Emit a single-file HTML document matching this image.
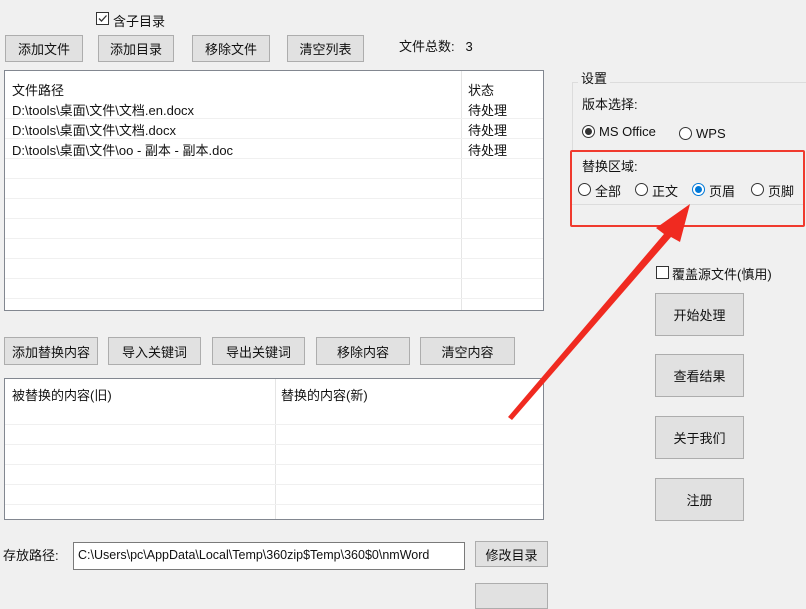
<!DOCTYPE html>
<html><head><meta charset="utf-8"><style>
*{box-sizing:border-box;margin:0;padding:0}
body{width:806px;height:588px;background:#f0f0f0;position:relative;overflow:hidden;font-family:"Liberation Sans","Microsoft YaHei","Noto Sans CJK SC",sans-serif;font-size:13px;color:#111}
.a{position:absolute;white-space:nowrap}
.btn{position:absolute;background:#e1e1e1;border:1px solid #adadad;display:flex;align-items:center;justify-content:center;font-size:13px}
.list{position:absolute;background:#fff;border:1px solid #828790}
.hl{position:absolute;left:0;right:0;height:1px;background:#f0f0f0}
.vl{position:absolute;top:0;bottom:0;width:1px;background:#f0f0f0}
.rad{position:absolute;width:13px;height:13px;border:1px solid #333;border-radius:50%;background:#fff}
.rad.on::after{content:"";position:absolute;left:2px;top:2px;width:7px;height:7px;border-radius:50%;background:#333}
.rad.blue{border-color:#0078d7}.rad.blue::after{background:#0078d7}
.chk{position:absolute;width:13px;height:13px;border:1px solid #333;background:#fff}
</style></head><body>
<div class="chk" style="left:96px;top:12px"><svg width="11" height="11" style="position:absolute;left:0;top:0"><path d="M2 5.5 L4.5 8 L9.5 2.5" stroke="#333" stroke-width="1.3" fill="none"/></svg></div>
<div class="a" style="left:113px;top:11px">含子目录</div>
<div class="btn" style="left:5px;top:35px;width:78px;height:27px">添加文件</div>
<div class="btn" style="left:98px;top:35px;width:76px;height:27px">添加目录</div>
<div class="btn" style="left:192px;top:35px;width:78px;height:27px">移除文件</div>
<div class="btn" style="left:287px;top:35px;width:77px;height:27px">清空列表</div>
<div class="a" style="left:399px;top:36px">文件总数:&nbsp;&nbsp;&nbsp;3</div>

<div class="list" style="left:4px;top:70px;width:540px;height:241px">
<div class="vl" style="left:456px;background:#e5e5e5"></div>
<div class="a" style="left:7px;top:9px">文件路径</div><div class="a" style="left:463px;top:9px">状态</div>
<div class="hl" style="top:47px"></div><div class="hl" style="top:67px"></div><div class="hl" style="top:87px"></div><div class="hl" style="top:107px"></div><div class="hl" style="top:127px"></div><div class="hl" style="top:147px"></div><div class="hl" style="top:167px"></div><div class="hl" style="top:187px"></div><div class="hl" style="top:207px"></div><div class="hl" style="top:227px"></div>
<div class="a" style="left:7px;top:29px">D:\tools\桌面\文件\文档.en.docx</div><div class="a" style="left:463px;top:29px">待处理</div>
<div class="a" style="left:7px;top:49px">D:\tools\桌面\文件\文档.docx</div><div class="a" style="left:463px;top:49px">待处理</div>
<div class="a" style="left:7px;top:69px">D:\tools\桌面\文件\oo - 副本 - 副本.doc</div><div class="a" style="left:463px;top:69px">待处理</div>
</div>

<div class="btn" style="left:4px;top:337px;width:94px;height:28px">添加替换内容</div>
<div class="btn" style="left:108px;top:337px;width:93px;height:28px">导入关键词</div>
<div class="btn" style="left:212px;top:337px;width:93px;height:28px">导出关键词</div>
<div class="btn" style="left:316px;top:337px;width:94px;height:28px">移除内容</div>
<div class="btn" style="left:420px;top:337px;width:95px;height:28px">清空内容</div>

<div class="list" style="left:4px;top:378px;width:540px;height:142px">
<div class="vl" style="left:270px;background:#e5e5e5"></div>
<div class="a" style="left:7px;top:6px">被替换的内容(旧)</div><div class="a" style="left:276px;top:6px">替换的内容(新)</div>
<div class="hl" style="top:45px"></div><div class="hl" style="top:65px"></div><div class="hl" style="top:85px"></div><div class="hl" style="top:105px"></div><div class="hl" style="top:125px"></div>
</div>

<div class="a" style="left:3px;top:545px">存放路径:</div>
<div class="a" style="left:73px;top:542px;width:392px;height:28px;background:#fff;border:1px solid #7a7a7a;overflow:hidden;padding:5px 0 0 4px;font-size:12.5px">C:\Users\pc\AppData\Local\Temp\360zip$Temp\360$0\nmWord</div>
<div class="btn" style="left:475px;top:541px;width:73px;height:26px">修改目录</div>
<div class="btn" style="left:475px;top:583px;width:73px;height:26px"></div>

<div class="a" style="left:572px;top:82px;width:240px;height:70px;border:1px solid #dcdcdc;border-bottom:none"></div>
<div class="a" style="left:578px;top:68px;background:#f0f0f0;padding:0 3px">设置</div>
<div class="a" style="left:582px;top:94px">版本选择:</div>
<div class="rad on" style="left:582px;top:125px"></div><div class="a" style="left:599px;top:124px">MS Office</div>
<div class="rad" style="left:679px;top:127px"></div><div class="a" style="left:696px;top:126px">WPS</div>
<div class="a" style="left:570px;top:150px;width:235px;height:77px;border:2px solid #f03a2e;background:#f0f0f0;border-radius:2px"></div>
<div class="a" style="left:572px;top:204px;width:231px;height:1px;background:#dcdcdc"></div>
<div class="a" style="left:582px;top:156px">替换区域:</div>
<div class="rad" style="left:578px;top:183px"></div><div class="a" style="left:595px;top:181px">全部</div>
<div class="rad" style="left:635px;top:183px"></div><div class="a" style="left:652px;top:181px">正文</div>
<div class="rad on blue" style="left:692px;top:183px"></div><div class="a" style="left:709px;top:181px">页眉</div>
<div class="rad" style="left:751px;top:183px"></div><div class="a" style="left:768px;top:181px">页脚</div>

<div class="chk" style="left:656px;top:266px"></div><div class="a" style="left:672px;top:264px">覆盖源文件(慎用)</div>
<div class="btn" style="left:655px;top:293px;width:89px;height:43px">开始处理</div>
<div class="btn" style="left:655px;top:354px;width:89px;height:43px">查看结果</div>
<div class="btn" style="left:655px;top:416px;width:89px;height:43px">关于我们</div>
<div class="btn" style="left:655px;top:478px;width:89px;height:43px">注册</div>

<svg class="a" style="left:0;top:0" width="806" height="588">
<polygon points="508,417 664,234 656,228 690,204 680,242 671,237 512,420" fill="#f02a20"/>
</svg>
</body></html>
